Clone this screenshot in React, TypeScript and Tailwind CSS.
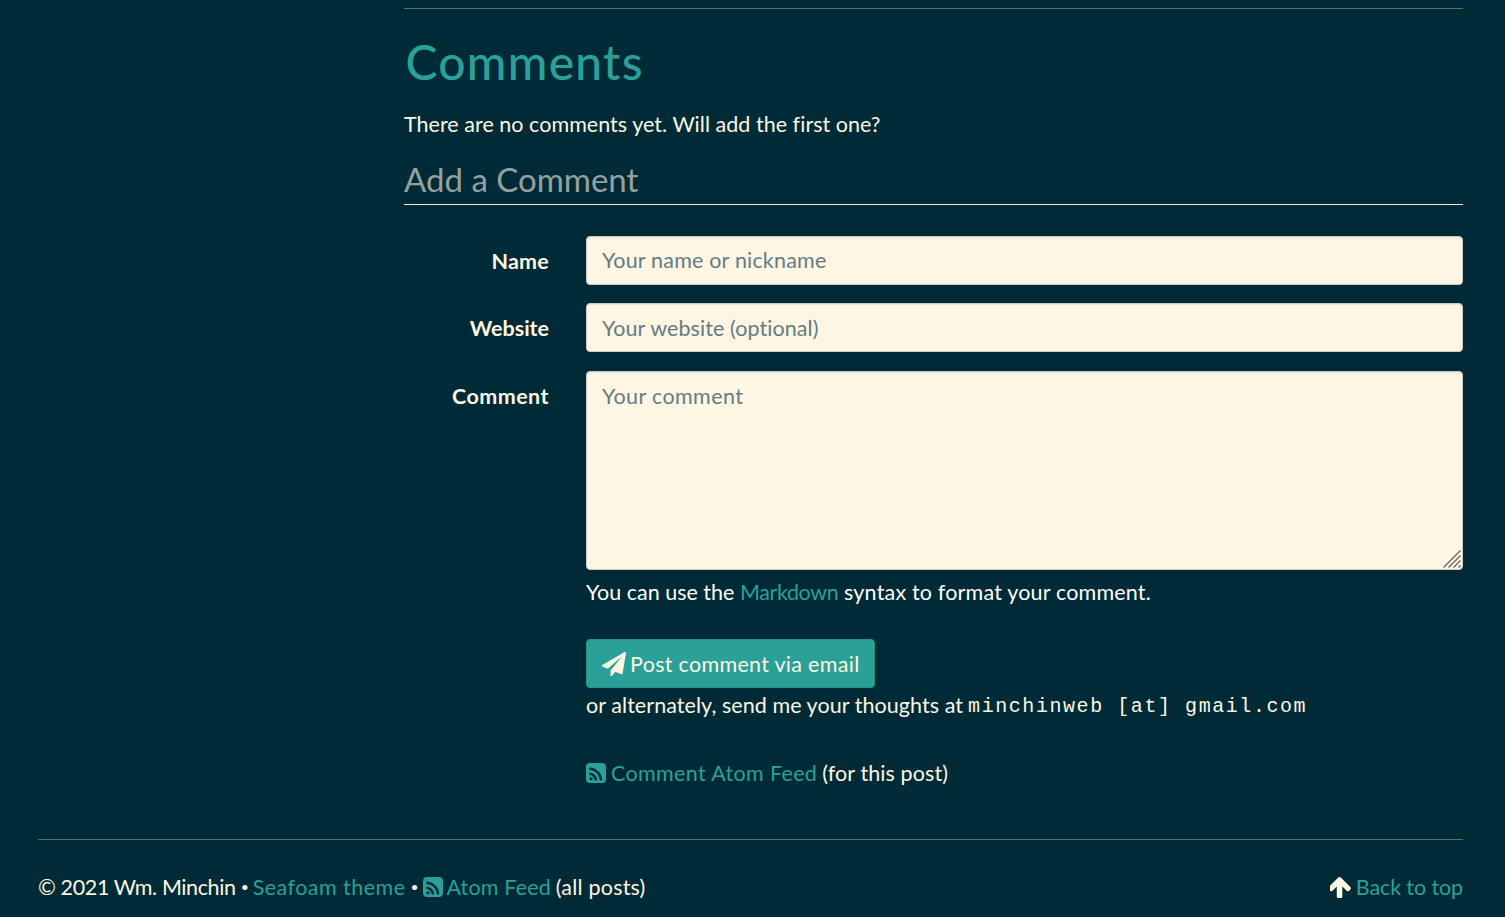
import type { ReactNode } from "react";

const PATHS = {
  up: "M1611 971q0 51-37 90l-75 75q-38 38-91 38-54 0-90-38l-294-293v704q0 52-37.5 84.5t-90.5 32.5h-128q-53 0-90.5-32.5t-37.5-84.5v-704l-294 293q-36 38-90 38t-90-38l-75-75q-38-38-38-90 0-53 38-91l651-651q35-37 90-37 54 0 91 37l651 651q37 39 37 91z",
  rss: "M640 1344q0-53-37.5-90.5t-90.5-37.5-90.5 37.5-37.5 90.5 37.5 90.5 90.5 37.5 90.5-37.5 37.5-90.5zm351 94q-13-232-177-396t-396-177q-14-1-24 9t-10 23v128q0 13 8.5 22t21.5 10q154 11 264 121t121 264q1 13 10 21.5t22 8.5h128q13 0 23-10t9-24zm384 1q-5-154-56-297.5t-139.5-260-205-205-260-139.5-297.5-56q-14-1-23 9-10 10-10 23v128q0 13 9 22t22 10q204 7 378 111.5t278.5 278.5 111.5 378q1 13 10 22t22 9h128q13 0 23-10 11-9 9-23zm289-1023v960q0 119-84.5 203.5t-203.5 84.5h-960q-119 0-203.5-84.5t-84.5-203.5v-960q0-119 84.5-203.5t203.5-84.5h960q119 0 203.5 84.5t84.5 203.5z",
  plane: "M1764 11q33 24 27 64l-256 1536q-5 29-32 45-14 8-31 8-11 0-24-5l-453-185-242 295q-18 23-49 23-13 0-22-4-19-7-30.5-23.5t-11.5-36.5v-349l864-1059-1069 925-395-162q-37-14-40-55-2-40 32-59l1664-960q15-9 32-9 20 0 36 11z",
};

function Icon({ name, box, className }: { name: keyof typeof PATHS; box: string; className: string }) {
  return (
    <svg viewBox={box} className={`shrink-0 fill-current ${className}`} aria-hidden="true">
      <path d={PATHS[name]} />
    </svg>
  );
}

function Row({ label, tracking, children }: { label: string; tracking: string; children: ReactNode }) {
  return (
    <div className="flex">
      <div className={`w-[145px] shrink-0 pt-[9px] text-right font-bold leading-8 ${tracking}`}>{label}</div>
      <div className="ml-[37px] flex-1">{children}</div>
    </div>
  );
}

const field =
  "block w-full rounded-[4px] border border-[#ccc] bg-[#fdf6e3] px-[15px] text-[#657b83] placeholder:text-[#657b83] placeholder:opacity-100 shadow-[inset_0_1px_1px_rgba(0,0,0,0.075)] outline-none";

export default function App() {
  return (
    <div className="h-[917px] overflow-hidden bg-[#002b36] pl-[38px] pr-[42px] pt-2 font-['Lato',sans-serif] text-[21.5px] leading-8 whitespace-nowrap text-[#fdf6e3]">
      <main className="ml-[366px]">
        <hr className="border-[#586e75]" />
        <h1 className="mt-[21px] h-16 pl-[1.5px] text-[48px] leading-[63px] font-medium tracking-[1.25px] text-[#2aa198]">Comments</h1>
        <p className="mt-[14px] tracking-[0.03px]">There are no comments yet. Will add the first one?</p>
        <h2 className="mt-[19px] h-[46px] border-b border-[#eee8d5] text-[33px] leading-[41px] text-[#93a1a1]">Add a Comment</h2>
        <form className="mt-[31px] flex flex-col">
          <Row label="Name" tracking="tracking-[0.2px]">
            <input className={`${field} h-[49px] pb-[2px] tracking-[0.19px]`} placeholder="Your name or nickname" />
          </Row>
          <div className="mt-[18px]">
            <Row label="Website" tracking="tracking-normal">
              <input className={`${field} h-[49px] tracking-[0.09px]`} placeholder="Your website (optional)" />
            </Row>
          </div>
          <div className="mt-[19px]">
            <Row label="Comment" tracking="tracking-[0.45px]">
              <textarea className={`${field} h-[199px] resize-none pt-[8px] leading-8 tracking-[0.38px]`} placeholder="Your comment" />
              <svg viewBox="0 0 18 18" className="relative -mt-[20px] mb-[2px] mr-[2px] ml-auto block h-[18px] w-[18px] stroke-[#6b6760]" fill="none" strokeWidth="1.4">
                <path d="M0.5 17.5 17.5 0.5M5.5 17.5 17.5 5.5M10.5 17.5 17.5 10.5M15.5 17.5 17.5 15.5" />
              </svg>
              <p className="mt-[8px] text-white">
                You can use the <a className="tracking-[-0.38px] text-[#2aa198]">Markdown</a>
                <span className="tracking-[0.18px]"> syntax to format your comment.</span>
              </p>
              <button type="button" className="mt-[31px] flex h-[49px] w-[289px] items-center rounded-[4px] border border-[#259188] bg-[#2aa198] pl-[15px]">
                <Icon name="plane" box="0 0 1792 1792" className="size-[24px]" />
                <span className="ml-1 tracking-[0.3px]">Post comment via email</span>
              </button>
              <p className="mt-px flex h-8">
                <span className="tracking-[0.06px]">or alternately, send me your thoughts at</span>
                <span className="ml-[5px] pt-[2px] font-['Liberation_Mono',monospace] text-[20px] tracking-[1.56px]">minchinweb [at] gmail.com</span>
              </p>
              <p className="mt-[36px] flex items-center">
                <Icon name="rss" box="128 128 1536 1536" className="size-5 text-[#2aa198]" />
                <a className="ml-[5px] tracking-[0.35px] text-[#2aa198]">Comment Atom Feed</a>
                <span className="ml-[5px] tracking-[0.1px]">(for this post)</span>
              </p>
            </Row>
          </div>
        </form>
      </main>
      <footer className="mt-[50px] flex items-center border-t border-[#586e75] pt-[31px]">
        <span className="tracking-[-0.38px]">© 2021 Wm. Minchin</span>
        <span className="ml-[5px] text-[14px]">•</span>
        <a className="ml-[4px] tracking-[0.45px] text-[#2aa198]">Seafoam theme</a>
        <span className="ml-[5px] text-[14px]">•</span>
        <Icon name="rss" box="128 128 1536 1536" className="ml-[4px] size-5 text-[#2aa198]" />
        <a className="ml-[4px] tracking-[0.15px] text-[#2aa198]">Atom Feed</a>
        <span className="ml-[5px] tracking-[0.2px]">(all posts)</span>
        <Icon name="up" box="181 192 1430 1450" className="mr-[5px] ml-auto size-[21px]" />
        <a className="tracking-[-0.1px] text-[#2aa198]">Back to top</a>
      </footer>
    </div>
  );
}
